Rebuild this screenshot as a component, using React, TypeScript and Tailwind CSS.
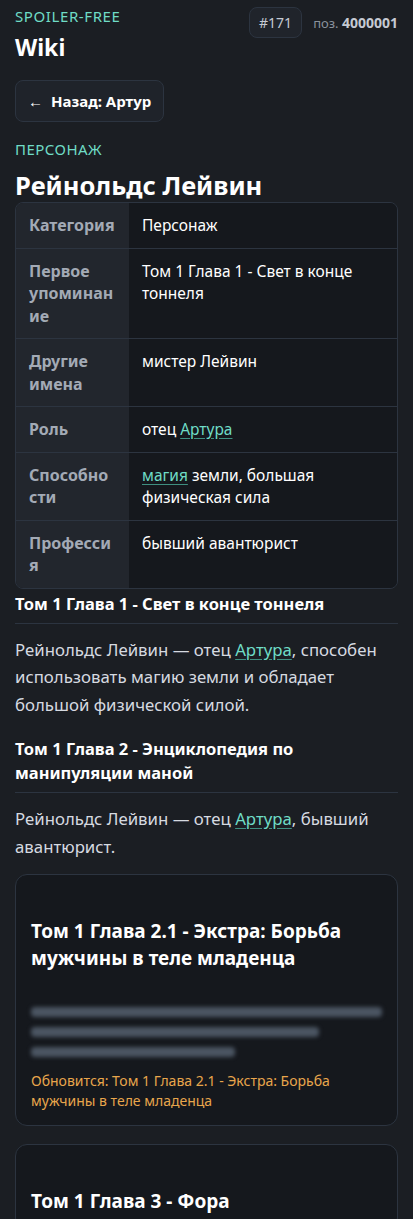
const font = { fontFamily: '"Noto Sans", "Open Sans", sans-serif' };

type Row = { label: string; value: React.ReactNode };

function Link({ children }: { children: React.ReactNode }) {
  return <a className="text-[#6fdcc6] underline decoration-[#3f8f80] underline-offset-[3px]">{children}</a>;
}

const rows: Row[] = [
  { label: 'Категория', value: 'Персонаж' },
  { label: 'Первое упоминание', value: 'Том 1 Глава 1 - Свет в конце тоннеля' },
  { label: 'Другие имена', value: 'мистер Лейвин' },
  { label: 'Роль', value: <>отец <Link>Артура</Link></> },
  { label: 'Способности', value: <><Link>магия</Link> земли, большая физическая сила</> },
  { label: 'Профессия', value: 'бывший авантюрист' },
];

function LockedCard({ title, note }: { title: string; note?: string }) {
  return (
    <div className="rounded-xl border border-[#2c3440] bg-[#15181d] px-[15px] pt-[43px] pb-[14px]">
      <h3 className="text-[19px] font-bold leading-[27px] text-white">{title}</h3>
      {note && (
        <>
          <div className="mt-[35px] flex flex-col gap-[10px] blur-[2px]">
            <div className="h-[10px] w-full rounded bg-[#4b5562]" />
            <div className="h-[10px] w-[82%] rounded bg-[#4b5562]" />
            <div className="h-[10px] w-[58%] rounded bg-[#4b5562]" />
          </div>
          <p className="mt-[14px] text-[14px] leading-[20px] text-[#e8a64c]">{note}</p>
        </>
      )}
    </div>
  );
}

export default function App() {
  return (
    <div className="min-h-[1219px] bg-[#1b1e23] px-[15px] pt-[6px] text-white" style={font}>
      <header className="flex items-start justify-between">
        <div>
          <div className="text-[15px] leading-[20px] tracking-[0.04em] text-[#6fdcc6]">SPOILER-FREE</div>
          <h1 className="mt-[6px] text-[23px] font-bold leading-[30px]">Wiki</h1>
        </div>
        <div className="mt-[1px] flex items-center gap-[11px]">
          <span className="rounded-lg border border-[#2c3440] bg-[#20242b] px-[9px] py-[4px] text-[14px] leading-[21px] text-[#c5cad3]">#171</span>
          <span className="text-[13px] text-[#8a919c]">
            поз. <b className="text-[14px] text-[#c5cad3]">4000001</b>
          </span>
        </div>
      </header>

      <button className="mt-[18px] rounded-lg border border-[#2c3440] bg-[#1f232a] px-[12px] py-[10px] text-[15px] font-bold leading-[20px] text-white">
        <span className="mr-[8px]">←</span>Назад: Артур
      </button>

      <div className="mt-[17px] text-[15px] leading-[20px] tracking-[0.03em] text-[#6fdcc6]">ПЕРСОНАЖ</div>
      <h2 className="mt-[10px] text-[25.5px] font-bold leading-[32px]">Рейнольдс Лейвин</h2>

      <div className="mt-[1px] overflow-hidden rounded-lg border border-[#2c3440]">
        {rows.map((r, i) => (
          <div key={i} className={`grid grid-cols-[113px_1fr] ${i > 0 ? 'border-t border-[#2c3440]' : ''}`}>
            <div className="break-words bg-[#22262d] px-[13px] py-[11px] text-[16px] font-bold leading-[22.5px] text-[#a3aab5]">{r.label}</div>
            <div className="bg-[#15181d] px-[13px] py-[11px] text-[15.5px] leading-[22.5px] text-white">{r.value}</div>
          </div>
        ))}
      </div>

      <h3 className="border-b border-[#2c3440] pt-[3px] pb-[7px] text-[16.5px] font-bold leading-[24px]">Том 1 Глава 1 - Свет в конце тоннеля</h3>
      <p className="mt-[12px] text-[16.8px] leading-[27.5px] text-[#d6dae0]">
        Рейнольдс Лейвин — отец <Link>Артура</Link>, способен использовать магию земли и обладает большой физической силой.
      </p>

      <h3 className="mt-[19px] border-b border-[#2c3440] pb-[7px] text-[16.5px] font-bold leading-[24px]">Том 1 Глава 2 - Энциклопедия по манипуляции маной</h3>
      <p className="mt-[12px] text-[16.8px] leading-[27.5px] text-[#d6dae0]">
        Рейнольдс Лейвин — отец <Link>Артура</Link>, бывший авантюрист.
      </p>

      <div className="mt-[14px] flex flex-col gap-[18px] pb-[20px]">
        <LockedCard
          title="Том 1 Глава 2.1 - Экстра: Борьба мужчины в теле младенца"
          note="Обновится: Том 1 Глава 2.1 - Экстра: Борьба мужчины в теле младенца"
        />
        <LockedCard title="Том 1 Глава 3 - Фора" />
      </div>
    </div>
  );
}
